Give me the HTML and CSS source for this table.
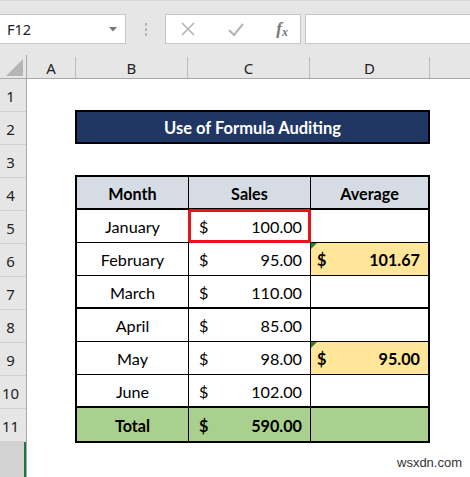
FILE: index.html
```html
<!DOCTYPE html>
<html>
<head>
<meta charset="utf-8">
<link rel="stylesheet" href="styles.css">
</head>
<body>
<div class="app">
  <div class="toolbar">
    <div class="namebox">
      <span class="name">F12</span>
      <svg class="drop" width="8" height="5" viewBox="0 0 8 5"><path d="M0 0H8L4 4.5Z" fill="#777"/></svg>
    </div>
    <div class="grip"><i></i><i></i><i></i></div>
    <div class="fbtns">
      <svg width="16" height="16" viewBox="0 0 16 16"><path d="M2 2L14 14M14 2L2 14" stroke="#b4b4b4" stroke-width="1.6" fill="none"/></svg>
      <svg width="18" height="16" viewBox="0 0 18 16"><path d="M2 9L7 14L16 3" stroke="#b4b4b4" stroke-width="2" fill="none"/></svg>
      <span class="fx">f<sub>x</sub></span>
    </div>
    <div class="finput"></div>
  </div>
  <div class="colheads">
    <div class="corner"><svg width="17" height="17" viewBox="0 0 17 17"><path d="M17 0V17H0Z" fill="#b5b5b5"/></svg></div>
    <div class="ch ca">A</div>
    <div class="ch cb">B</div>
    <div class="ch cc">C</div>
    <div class="ch cd">D</div>
    <div class="ch ce"></div>
  </div>
  <div class="sheet">
    <div class="rowheads">
      <div class="rh">1</div><div class="rh">2</div><div class="rh">3</div><div class="rh">4</div>
      <div class="rh">5</div><div class="rh">6</div><div class="rh">7</div><div class="rh">8</div>
      <div class="rh">9</div><div class="rh">10</div><div class="rh">11</div>
      <div class="rh sel"></div>
    </div>
    <div class="cells">
      <div class="title">Use of Formula Auditing</div>
      <div class="data">
        <div class="c hd">Month</div><div class="c hd">Sales</div><div class="c hd last">Average</div>

        <div class="c">January</div><div class="c num selbox"><span>$</span><span>100.00</span></div><div class="c last"></div>

        <div class="c">February</div><div class="c num"><span>$</span><span>95.00</span></div><div class="c last num avg"><span>$</span><span>101.67</span></div>

        <div class="c thick">March</div><div class="c num thick"><span>$</span><span>110.00</span></div><div class="c last thick"></div>

        <div class="c">April</div><div class="c num"><span>$</span><span>85.00</span></div><div class="c last"></div>

        <div class="c">May</div><div class="c num"><span>$</span><span>98.00</span></div><div class="c last num avg"><span>$</span><span>95.00</span></div>

        <div class="c thick">June</div><div class="c num thick"><span>$</span><span>102.00</span></div><div class="c last thick"></div>

        <div class="c tot bottom">Total</div><div class="c num tot bottom"><span>$</span><span>590.00</span></div><div class="c last tot bottom"></div>
      </div>
    </div>
  </div>
  <div class="watermark">wsxdn.com</div>
</div>
</body>
</html>
```

FILE: styles.css
```css
* { box-sizing: border-box; }
html, body { margin: 0; padding: 0; }
body { width: 470px; height: 477px; overflow: hidden; background: #fff; font-family: "Lato", "Liberation Sans", sans-serif; }
.app { position: relative; width: 470px; height: 477px; overflow: hidden; }

.toolbar { height: 55px; background: #e6e6e6; border-top: 1px solid #d8d8d8; display: flex; align-items: flex-start; padding-top: 13px; }
.namebox { width: 126px; height: 30px; background: #fff; border: 1px solid #c6c6c6; border-left: none; display: flex; align-items: center; justify-content: space-between; padding: 0 8px 0 7px; }
.name { font-family: "Noto Sans", "Open Sans", sans-serif; font-size: 14.5px; color: #222; }
.drop { margin-top: 1px; }
.grip { width: 39px; height: 30px; display: flex; flex-direction: column; align-items: center; justify-content: center; gap: 2px; }
.grip i { display: block; width: 2px; height: 3px; background: #b8b8b8; }
.fbtns { width: 136px; height: 30px; background: #fff; border: 1px solid #c6c6c6; display: flex; align-items: center; padding: 0 12px 0 14px; justify-content: space-between; }
.fx { font-family: "Liberation Serif", serif; font-style: italic; font-weight: bold; font-size: 17px; color: #777; line-height: 1; }
.fx sub { font-size: 12px; vertical-align: -2px; }
.finput { flex: 1; height: 30px; background: #fff; border: 1px solid #c6c6c6; border-right: none; margin-left: 4px; }

.colheads { height: 24px; display: flex; background: #e6e6e6; border-bottom: 1px solid #a9a9a9; }
.corner { width: 27px; border-right: 1px solid #a9a9a9; display: flex; align-items: flex-end; justify-content: flex-end; padding: 0 3px 2px 0; }
.ch { font-family: "Noto Sans", "Open Sans", sans-serif; font-size: 15px; color: #222; text-align: center; line-height: 23px; border-right: 1px solid #bdbdbd; margin-top: 2px; }
.ca { width: 49px; }
.cb { width: 112px; }
.cc { width: 122px; }
.cd { width: 120px; }
.ce { flex: 1; border-right: none; }

.sheet { display: flex; }
.rowheads { width: 27px; background: #e6e6e6; border-right: 1px solid #a9a9a9; display: flex; flex-direction: column; }
.rh { height: 33px; border-bottom: 1px solid #d2d2d2; font-family: "Noto Sans", "Open Sans", sans-serif; font-size: 15px; color: #222; text-align: center; padding-right: 5px; line-height: 34px; }
.rh.sel { height: 40px; background: #d2d2d2; border-bottom: none; box-shadow: inset -2px 0 0 #217346; }

.cells { padding: 31px 0 0 48px; }
.title { width: 355px; height: 34px; background: #203764; border: 2px solid #000; color: #fff; font-weight: bold; font-size: 16.5px; text-align: center; line-height: 32px; }

.data { margin-top: 31px; width: 355px; border: 2px solid #000; display: grid; grid-template-columns: 112px 122px 117px; grid-auto-rows: 33px; }
.c { border-right: 1px solid #000; border-bottom: 1px solid #000; font-size: 16.2px; color: #000; display: flex; align-items: center; justify-content: center; padding-top: 1px; position: relative; }
.c.last { border-right: none; }
.c.hd { background: #d6dce4; font-weight: bold; border-bottom-width: 2px; }
.c.thick { border-bottom-width: 2px; }
.c.bottom { border-bottom: none; }
.c.num { justify-content: space-between; padding: 1px 8px 0 10px; }
.c.avg { background: #ffe699; font-weight: bold; padding-left: 6px; }
.c.avg::before { content: ""; position: absolute; left: 0; top: 0; border-top: 6px solid #2e7d32; border-right: 6px solid transparent; }
.c.tot { background: #a9d08e; font-weight: bold; }
.selbox::after { content: ""; position: absolute; left: -1px; top: -1px; right: -1px; bottom: -1px; border: 3px solid #e8141c; border-radius: 2px; }

.watermark { position: absolute; left: 397px; top: 455px; font-family: "Liberation Sans", "Noto Sans", sans-serif; font-size: 13px; color: #333; }
```
